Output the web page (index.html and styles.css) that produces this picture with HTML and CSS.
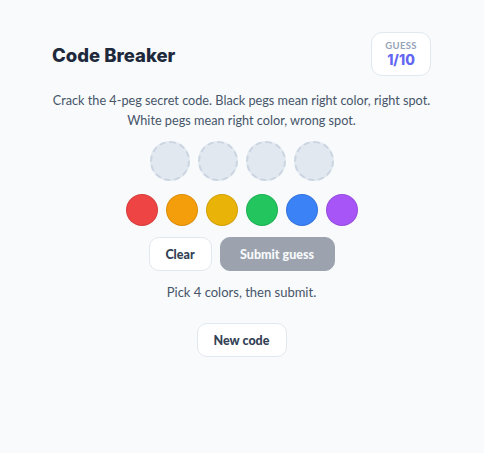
FILE: index.html
```html
<!DOCTYPE html>
<html>
<head>
<meta charset="utf-8">
<link rel="stylesheet" href="styles.css">
</head>
<body>
<div class="app">
  <header class="head">
    <h1 class="title">Code Breaker</h1>
    <div class="badge">
      <span class="badge-label">GUESS</span>
      <span class="badge-value">1/10</span>
    </div>
  </header>
  <p class="desc">Crack the 4-peg secret code. Black pegs mean right color, right spot.<br>White pegs mean right color, wrong spot.</p>
  <div class="slots">
    <span class="slot"></span><span class="slot"></span><span class="slot"></span><span class="slot"></span>
  </div>
  <div class="palette">
    <span class="peg red"></span>
    <span class="peg orange"></span>
    <span class="peg yellow"></span>
    <span class="peg green"></span>
    <span class="peg blue"></span>
    <span class="peg purple"></span>
  </div>
  <div class="actions">
    <button class="btn">Clear</button>
    <button class="btn primary">Submit guess</button>
  </div>
  <p class="status">Pick 4 colors, then submit.</p>
  <div class="footer">
    <button class="btn">New code</button>
  </div>
</div>
</body>
</html>
```
FILE: styles.css
```css
* { box-sizing: border-box; }
html, body { margin: 0; }
body {
  background: #f8fafc;
  font-family: Lato, "Noto Sans", sans-serif;
  color: #1e293b;
  width: 484px;
  height: 453px;
}
.app {
  padding: 32px 53px 0 52px;
  display: flex;
  flex-direction: column;
  align-items: center;
}
.head {
  width: 100%;
  display: flex;
  justify-content: space-between;
  align-items: center;
}
.title {
  margin: 2px 0 0;
  font-family: Inter, Lato, sans-serif;
  font-size: 18.5px;
  font-weight: 800;
  color: #1e293b;
}
.badge {
  width: 60px;
  height: 44px;
  border: 1px solid #e2e8f0;
  border-radius: 11px;
  background: #fff;
  display: flex;
  flex-direction: column;
  align-items: center;
  justify-content: center;
  line-height: 1.1;
}
.badge-label {
  font-size: 9.5px;
  font-weight: 700;
  color: #94a3b8;
  letter-spacing: 0.3px;
}
.badge-value {
  font-family: Inter, Lato, sans-serif;
  font-size: 14px;
  font-weight: 800;
  color: #6366f1;
  margin-top: 1px;
}
.desc {
  margin: 14px -20px 0;
  text-align: center;
  font-size: 12.7px;
  line-height: 20px;
  color: #475569;
}
.slots {
  display: flex;
  gap: 8px;
  margin-top: 11px;
}
.slot {
  width: 40px;
  height: 40px;
  border-radius: 50%;
  background: #e2e8f0;
  border: 2px dashed #cbd5e1;
}
.palette {
  display: flex;
  gap: 8px;
  margin-top: 13px;
}
.peg {
  width: 32px;
  height: 32px;
  border-radius: 50%;
  border: 1.5px solid rgba(0,0,0,0.1);
}
.red { background: #ef4444; }
.orange { background: #f59e0b; }
.yellow { background: #eab308; }
.green { background: #22c55e; }
.blue { background: #3b82f6; }
.purple { background: #a855f7; }
.actions {
  display: flex;
  gap: 8px;
  margin-top: 11px;
}
.btn {
  font-family: inherit;
  font-size: 12.5px;
  font-weight: 900;
  color: #334155;
  background: #fff;
  border: 1px solid #e2e8f0;
  border-radius: 10px;
  height: 34px;
  width: 63px;
  padding: 0;
  cursor: pointer;
}
.btn.primary {
  background: #9ca3af;
  border-color: #9ca3af;
  color: #f8fafc;
  width: 115px;
}
.status {
  margin: 13px 0 0;
  font-size: 13px;
  line-height: 16px;
  color: #475569;
}
.footer {
  margin-top: 23px;
}
.footer .btn {
  width: 90px;
}
```
